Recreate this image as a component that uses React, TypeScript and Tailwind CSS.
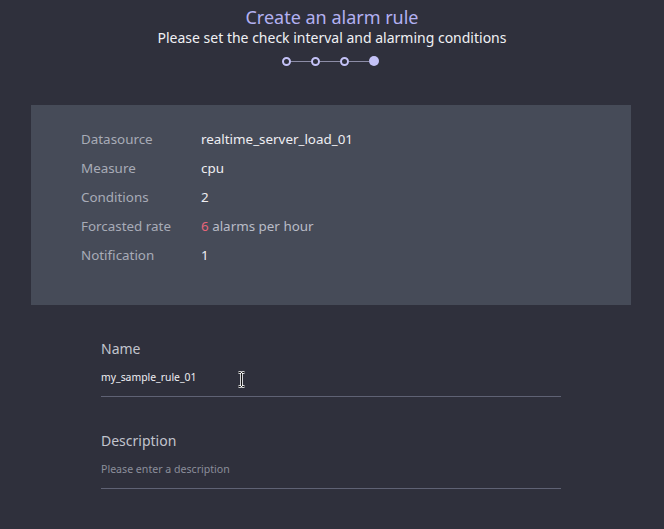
import React from "react";

const rows: { label: string; value: React.ReactNode }[] = [
  { label: "Datasource", value: "realtime_server_load_01" },
  { label: "Measure", value: "cpu" },
  { label: "Conditions", value: "2" },
  {
    label: "Forcasted rate",
    value: (
      <>
        <span className="text-[#e5657a]">6</span>
        <span className="text-[#b9bcc7]"> alarms per hour</span>
      </>
    ),
  },
  { label: "Notification", value: "1" },
];

function Stepper() {
  const Open = () => (
    <div className="w-[9px] h-[9px] rounded-full border-2 border-[#c4c2f7] box-border" />
  );
  const Line = () => <div className="w-[20px] h-px bg-[#8c8ca6]" />;
  return (
    <div className="flex items-center justify-center mt-[8px] -ml-[3px]">
      <Open />
      <Line />
      <Open />
      <Line />
      <Open />
      <Line />
      <div className="w-[10px] h-[10px] rounded-full bg-[#c4c2f7]" />
    </div>
  );
}

function IBeam() {
  const d = "M1.5 1.5 H3.5 L4.5 2.5 L5.5 1.5 H7.5 M4.5 2.5 V14.5 M1.5 15.5 H3.5 L4.5 14.5 L5.5 15.5 H7.5";
  return (
    <svg width="9" height="17" viewBox="0 0 9 17" className="absolute left-[136px] top-[3px]">
      <path d={d} fill="none" stroke="#ffffff" strokeWidth="2.6" strokeLinejoin="round" />
      <path d={d} fill="none" stroke="#111111" strokeWidth="1" />
    </svg>
  );
}

export default function App() {
  return (
    <div
      className="w-[664px] h-[529px] bg-[#2f303c] overflow-hidden"
      style={{ fontFamily: '"Noto Sans", "Open Sans", sans-serif' }}
    >
      <div className="flex flex-col items-center pt-[5px]">
        <div className="text-[18px] leading-[24px] text-[#b3b1f2]">Create an alarm rule</div>
        <div className="text-[14px] leading-[20px] text-[#f0f0f4] -mt-[1px]">
          Please set the check interval and alarming conditions
        </div>
        <Stepper />
      </div>

      <div className="mx-[31px] w-[600px] mt-[39px] h-[200px] bg-[#464b58] pt-[20px] pl-[50px] flex flex-col">
        {rows.map((r) => (
          <div key={r.label} className="flex h-[29px] items-center text-[13.4px]">
            <div className="w-[120px] text-[#a8abb7]">{r.label}</div>
            <div className="text-[#eeeef2]">{r.value}</div>
          </div>
        ))}
      </div>

      <div className="ml-[101px] w-[460px] mt-[33px]">
        <div className="h-[20px] flex items-center text-[14px] text-[#c2c4cd]">Name</div>
        <div className="relative mt-[10px] h-[20px] pb-[8px] box-content flex items-center text-[10.4px] text-[#eeeef2] border-b border-[#5f6274]">
          my_sample_rule_01
          <IBeam />
        </div>

        <div className="h-[20px] flex items-center text-[14px] text-[#c2c4cd] mt-[33px]">Description</div>
        <div className="mt-[10px] h-[20px] pb-[8px] box-content flex items-center text-[10.6px] text-[#8b8e9a] border-b border-[#5f6274]">
          Please enter a description
        </div>
      </div>
    </div>
  );
}
